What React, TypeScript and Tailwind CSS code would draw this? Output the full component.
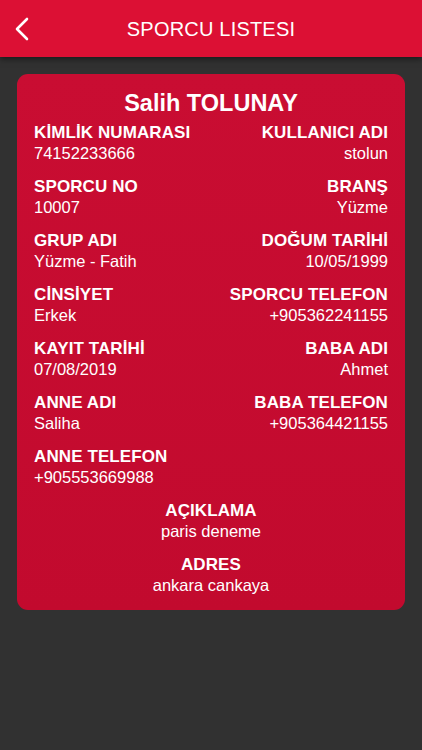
import React from 'react';

type Field = { label: string; value: string };

const rows: [Field, Field | null][] = [
  [{ label: 'KİMLİK NUMARASI', value: '74152233666' }, { label: 'KULLANICI ADI', value: 'stolun' }],
  [{ label: 'SPORCU NO', value: '10007' }, { label: 'BRANŞ', value: 'Yüzme' }],
  [{ label: 'GRUP ADI', value: 'Yüzme - Fatih' }, { label: 'DOĞUM TARİHİ', value: '10/05/1999' }],
  [{ label: 'CİNSİYET', value: 'Erkek' }, { label: 'SPORCU TELEFON', value: '+905362241155' }],
  [{ label: 'KAYIT TARİHİ', value: '07/08/2019' }, { label: 'BABA ADI', value: 'Ahmet' }],
  [{ label: 'ANNE ADI', value: 'Saliha' }, { label: 'BABA TELEFON', value: '+905364421155' }],
  [{ label: 'ANNE TELEFON', value: '+905553669988' }, null],
];

const centered: Field[] = [
  { label: 'AÇIKLAMA', value: 'paris deneme' },
  { label: 'ADRES', value: 'ankara cankaya' },
];

const Item = ({ field, align }: { field: Field; align: 'left' | 'right' | 'center' }) => {
  const alignClass = align === 'left' ? 'text-left' : align === 'right' ? 'text-right' : 'text-center';
  return (
    <div className={`flex flex-col ${alignClass}`}>
      <span className="text-[17px] leading-[20px] font-bold tracking-[0.1px]">{field.label}</span>
      <span className="text-[16.5px] leading-[20px]">{field.value}</span>
    </div>
  );
};

export default function App() {
  return (
    <div
      className="w-[422px] h-[750px] bg-[#313131] text-white flex flex-col"
      style={{ fontFamily: '"Liberation Sans", Arial, sans-serif' }}
    >
      {/* header */}
      <div className="relative h-[57px] shrink-0 bg-[#dc1034] flex items-center justify-center shadow-[0_2px_6px_rgba(0,0,0,0.5)] z-10">
        <button className="absolute left-[14px] top-[16px] w-[16px] h-[26px]">
          <svg width="16" height="26" viewBox="0 0 16 26" fill="none">
            <path d="M13 3 L3 13 L13 23" stroke="white" strokeWidth="2.6" strokeLinecap="round" strokeLinejoin="round" />
          </svg>
        </button>
        <h1 className="text-[20px] font-normal tracking-[0.2px]">SPORCU LISTESI</h1>
      </div>

      {/* card */}
      <div className="mx-[17px] mt-[17px] rounded-[11px] bg-gradient-to-b from-[#c90d32] to-[#c20a2e] px-[17px] pt-[16px] pb-[15px]">
        <h2 className="text-center text-[23.5px] leading-[26px] font-bold mb-[7px]">Salih TOLUNAY</h2>
        <div className="flex flex-col gap-[14px]">
          {rows.map(([l, r], i) => (
            <div key={i} className="flex justify-between">
              <Item field={l} align="left" />
              {r && <Item field={r} align="right" />}
            </div>
          ))}
          {centered.map((f) => (
            <Item key={f.label} field={f} align="center" />
          ))}
        </div>
      </div>
    </div>
  );
}
